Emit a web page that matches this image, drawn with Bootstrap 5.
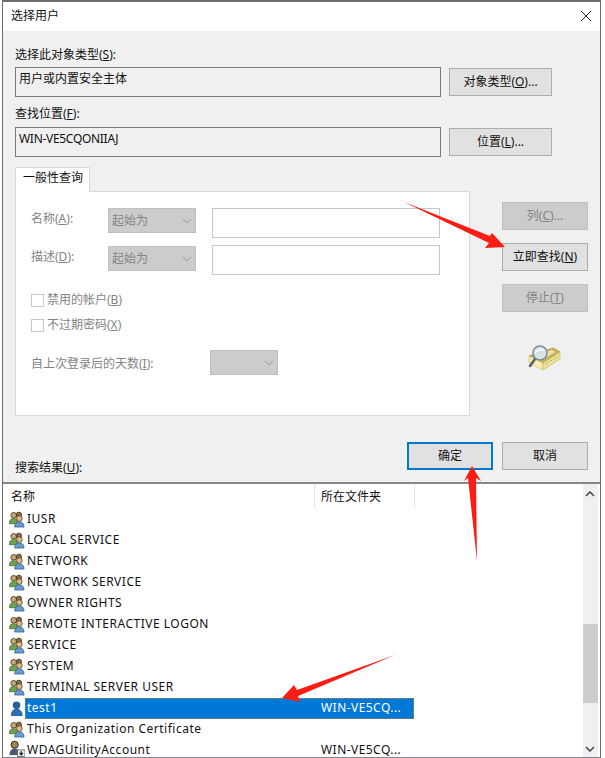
<!DOCTYPE html>
<html lang="zh">
<head>
<meta charset="utf-8">
<title>选择用户</title>
<link href="https://cdn.jsdelivr.net/npm/bootstrap@5.3.0/dist/css/bootstrap.min.css" rel="stylesheet">
<style>
html,body{margin:0;padding:0;background:#fff;}
body{width:605px;height:758px;overflow:hidden;position:relative;font:12px/16px "Noto Sans","Noto Sans CJK SC",sans-serif;color:#111;}
.dlg{position:relative;width:599px;height:758px;margin-left:2px;border:solid #6e6e6e;border-width:2px 1px 0 1px;background:#f0f0f0;display:flex;flex-direction:column;}
.ttl{height:29px;background:#fff;display:flex;align-items:center;justify-content:space-between;padding:0 8px 2px;font-size:12px;flex:none;}
.xbtn{width:12px;height:12px;display:block;}
.bodyarea{padding:0 11px 0 12px;height:385px;flex:none;display:flex;flex-direction:column;}
.lbl{display:block;height:16px;}
.lbl1{margin-top:16px;}
.lbl2{margin-top:9px;}
.fldrow{display:flex;gap:8px;align-items:flex-start;margin-top:4px;}
.fldrow2{margin-top:5px;}
.rofield{width:426px;height:30px;border:1px solid #7a7a7a;padding:3px 3px;background:#f0f0f0;}
.tight{letter-spacing:-.3px;}
.wbtn{height:28px;margin-top:1px;background:#e1e1e1;border:1px solid #adadad;font-size:12px;line-height:24px;text-align:center;padding:0;color:#111;flex:none;}
.wbtn.off{background:#ccc;color:#838383;border-color:#bfbfbf;}
.w103{width:103px;}.w86{width:86px;}
.querywrap{display:flex;gap:32px;margin-top:10px;}
.qcol{width:455px;flex:none;}
.tabhead{width:75px;height:25px;background:#fff;border:1px solid #d9d9d9;border-bottom:0;padding:2px 0 0 7px;white-space:nowrap;position:relative;margin-bottom:-1px;z-index:1;}
.qpanel{height:225px;background:#fff;border:1px solid #d9d9d9;color:#838383;padding:16px 15px 0;}
.qline{display:flex;align-items:flex-start;height:30px;margin-bottom:7px;}
.qline span.nm{width:77px;padding-top:3px;}
.qline2 span.nm{padding-top:4px;}
.qline2 .ddl{margin-top:1px;}
.ddl{width:88px;height:25px;background:#ccc;border:1px solid #bfbfbf;padding:3px 3px;display:flex;justify-content:space-between;align-items:center;flex:none;}
.txt{width:228px;height:30px;background:#fff;border:1px solid #c8c8c8;margin-left:16px;}
.chk{display:flex;align-items:center;gap:3px;height:16px;margin-bottom:9px;}
.chk1{margin-top:17px;}
.chkbox{width:13px;height:13px;border:1px solid #c8c8c8;background:#fff;}
.days{display:flex;align-items:center;margin-top:17px;}
.days span.nm{width:179px;padding-top:2px;}
.ddlsm{width:68px;justify-content:flex-end;}
.sidecol{width:86px;flex:none;padding-top:35px;}
.sidecol .wbtn{display:block;margin:0 0 13px;}
.magic{display:block;margin:33px 0 0 26px;}
.resrow{display:flex;justify-content:space-between;align-items:flex-end;height:66px;flex:none;margin:0 11px 0 12px;}
.reslbl{margin-bottom:6px;}
.okbtns{display:flex;gap:9px;margin-right:1px;margin-bottom:12px;}
.okbtns .wbtn{width:86px;margin:0;}
.okbtns .primaryb{border:2px solid #0078d7;line-height:22px;}
.lst{position:relative;flex:1;min-height:0;background:#fff;border-top:2px solid #828790;border-bottom:1px solid #828790;overflow:hidden;}
.hdr{display:flex;height:25px;line-height:25px;}
.hc1{width:311px;padding-left:8px;}
.hc2{width:101px;padding-left:6px;border-left:1px solid #e5e5e5;border-right:1px solid #e5e5e5;height:24px;}
.rw{display:flex;align-items:center;height:21px;letter-spacing:.5px;}
.rw svg{flex:none;margin-left:6px;width:16px;height:17px;}
.nmc{width:289px;height:21px;line-height:20px;padding-left:2px;flex:none;}
.fc{padding-left:7px;width:100px;line-height:20px;height:21px;flex:none;letter-spacing:.45px;}
.selbox{display:flex;background:#0078d7;color:#fff;outline:1px dotted #c2802c;outline-offset:-1px;}
.lastrw{height:17px;}
.lastrw .nmc,.lastrw .fc{height:17px;line-height:19px;}
.vs{position:absolute;right:2px;top:0;bottom:0;width:15px;background:#f0f0f0;}
.vs i{position:absolute;left:0;right:0;top:140px;height:79px;background:#cdcdcd;display:block;}
.vs svg{position:absolute;left:2px;width:10px;height:6px;}
.vs .up{top:7px;}
.vs .dn{bottom:5px;}
.arrows{position:absolute;left:0;top:0;width:605px;height:758px;pointer-events:none;z-index:5;}
</style>
</head>
<body>
<svg width="0" height="0" class="d-block position-absolute">
<defs>
<symbol id="grp" viewBox="0 0 17 17">
<circle cx="5" cy="4" r="3" fill="#c9a878" stroke="#4a3a20" stroke-width=".9"/>
<path d="M.5 12c0-3 2-4.500 4.500-4.500S9 9 9 12v1H.5z" fill="#6ea24f" stroke="#3d6b2d" stroke-width=".8"/>
<circle cx="10.500" cy="3.500" r="2.800" fill="#8c7040" stroke="#3a2c18" stroke-width=".9"/>
<circle cx="11" cy="7.500" r="3" fill="#e0b98a" stroke="#5a4226" stroke-width=".9"/>
<path d="M6 16.500c0-3.500 2-5.500 5-5.500s5 2 5 5.500z" fill="#6a9bd0" stroke="#2e5c94" stroke-width=".8"/>
</symbol>
<symbol id="usr" viewBox="0 0 17 17">
<circle cx="8" cy="5" r="4" fill="#2c5d9b"/>
<path d="M2.500 16c0-4 2-7 5.500-7s6 3 6 7z" fill="#2a6cb8" stroke="#1c4a80" stroke-width=".8"/>
</symbol>
<symbol id="usd" viewBox="0 0 17 17">
<circle cx="6" cy="4.500" r="3.800" fill="#a58350" stroke="#2e2414" stroke-width="1"/>
<path d="M1 15c0-4 2-6 5-6s5 2 5 6z" fill="#4a5a78" stroke="#2a3448" stroke-width=".8"/>
<rect x="9" y="10" width="8" height="7" fill="#e8e8e8" stroke="#555" stroke-width=".8"/>
<path d="M13 11.500v3M11.200 13.200l1.800 2 1.800-2" stroke="#111" stroke-width="1.200" fill="none"/>
</symbol>
</defs>
</svg>
<div class="dlg">
  <div class="ttl"><span>选择用户</span>
    <svg class="xbtn" viewBox="0 0 12 12"><path d="M1 1l10 10M11 1L1 11" stroke="#222" stroke-width="1" fill="none"/></svg>
  </div>
  <div class="bodyarea">
    <span class="lbl lbl1">选择此对象类型(<u>S</u>):</span>
    <div class="fldrow"><div class="rofield">用户或内置安全主体</div><button class="wbtn w103" type="button">对象类型(<u>O</u>)...</button></div>
    <span class="lbl lbl2">查找位置(<u>F</u>):</span>
    <div class="fldrow fldrow2"><div class="rofield tight">WIN-VE5CQONIIAJ</div><button class="wbtn w103" type="button">位置(<u>L</u>)...</button></div>
    <div class="querywrap">
      <div class="qcol">
        <div class="tabhead">一般性查询</div>
        <div class="qpanel">
          <div class="qline"><span class="nm">名称(<u>A</u>):</span><div class="ddl"><span>起始为</span><svg width="10" height="6" viewBox="0 0 10 6"><path d="M1 1l4 4 4-4" stroke="#999" fill="none"/></svg></div><div class="txt"></div></div>
          <div class="qline qline2"><span class="nm">描述(<u>D</u>):</span><div class="ddl"><span>起始为</span><svg width="10" height="6" viewBox="0 0 10 6"><path d="M1 1l4 4 4-4" stroke="#999" fill="none"/></svg></div><div class="txt"></div></div>
          <div class="chk chk1"><span class="chkbox"></span><span>禁用的帐户(<u>B</u>)</span></div>
          <div class="chk"><span class="chkbox"></span><span>不过期密码(<u>X</u>)</span></div>
          <div class="days"><span class="nm">自上次登录后的天数(<u>I</u>):</span><div class="ddl ddlsm"><svg width="10" height="6" viewBox="0 0 10 6"><path d="M1 1l4 4 4-4" stroke="#999" fill="none"/></svg></div></div>
        </div>
      </div>
      <div class="sidecol">
        <button class="wbtn off w86" type="button">列(<u>C</u>)...</button>
        <button class="wbtn w86" type="button">立即查找(<u>N</u>)</button>
        <button class="wbtn off w86" type="button">停止(<u>T</u>)</button>
        <svg class="magic" width="33" height="27" viewBox="0 0 33 27">
          <path d="M1 11L25 3l7 4-17 11z" fill="#c9b25a" stroke="#a89040" stroke-width=".7"/>
          <path d="M6 11L24 5l3 2-13 8z" fill="#efe3a8"/>
          <path d="M1 11l14 7v7L1 18z" fill="#f6eeb4" stroke="#c8b870" stroke-width=".6"/>
          <path d="M15 18L32 7v7L15 25z" fill="#ecdf96" stroke="#c0ae60" stroke-width=".6"/>
          <path d="M18 19l11-7" stroke="#8f8450" stroke-width="1" stroke-dasharray="1 2" fill="none"/>
          <path d="M7 14l-5 7" stroke="#5c6066" stroke-width="2.600" stroke-linecap="round"/>
          <circle cx="12" cy="8" r="7" fill="#d5e4ee" fill-opacity=".9" stroke="#7d8b99" stroke-width="1.500"/>
          <path d="M7 8c2-3 6-4 9-3" stroke="#fff" stroke-width="1.200" fill="none"/>
        </svg>
      </div>
    </div>
  </div>
  <div class="resrow">
    <span class="lbl reslbl">搜索结果(<u>U</u>):</span>
    <div class="okbtns"><button class="wbtn primaryb" type="button">确定</button><button class="wbtn" type="button">取消</button></div>
  </div>
  <div class="lst">
    <div class="hdr"><div class="hc1">名称</div><div class="hc2">所在文件夹</div></div>
    <div class="rw"><svg><use href="#grp"/></svg><span class="nmc">IUSR</span></div>
    <div class="rw"><svg><use href="#grp"/></svg><span class="nmc">LOCAL SERVICE</span></div>
    <div class="rw"><svg><use href="#grp"/></svg><span class="nmc">NETWORK</span></div>
    <div class="rw"><svg><use href="#grp"/></svg><span class="nmc">NETWORK SERVICE</span></div>
    <div class="rw"><svg><use href="#grp"/></svg><span class="nmc">OWNER RIGHTS</span></div>
    <div class="rw"><svg><use href="#grp"/></svg><span class="nmc">REMOTE INTERACTIVE LOGON</span></div>
    <div class="rw"><svg><use href="#grp"/></svg><span class="nmc">SERVICE</span></div>
    <div class="rw"><svg><use href="#grp"/></svg><span class="nmc">SYSTEM</span></div>
    <div class="rw"><svg><use href="#grp"/></svg><span class="nmc">TERMINAL SERVER USER</span></div>
    <div class="rw"><svg><use href="#usr"/></svg><div class="selbox"><span class="nmc">test1</span><span class="fc">WIN-VE5CQ...</span></div></div>
    <div class="rw"><svg><use href="#grp"/></svg><span class="nmc">This Organization Certificate</span></div>
    <div class="rw lastrw"><svg><use href="#usd"/></svg><span class="nmc">WDAGUtilityAccount</span><span class="fc">WIN-VE5CQ...</span></div>
    <div class="vs"><svg class="up" viewBox="0 0 10 6"><path d="M1 5l4-4 4 4" stroke="#444" stroke-width="1.500" fill="none"/></svg><i></i><svg class="dn" viewBox="0 0 10 6"><path d="M1 1l4 4 4-4" stroke="#444" stroke-width="1.500" fill="none"/></svg></div>
  </div>
</div>
<svg class="arrows" viewBox="0 0 605 758">
  <path d="M404 202L490 236 492 233 505 247 485 248 489 243z" fill="#fb1c14"/>
  <path d="M477 561L476 478 481 481 472 466 464 481 468 478z" fill="#fb1c14"/>
  <path d="M395 655L297 690 294 685 282 698 300 702 298 696z" fill="#fb1c14"/>
</svg>
</body>
</html>
